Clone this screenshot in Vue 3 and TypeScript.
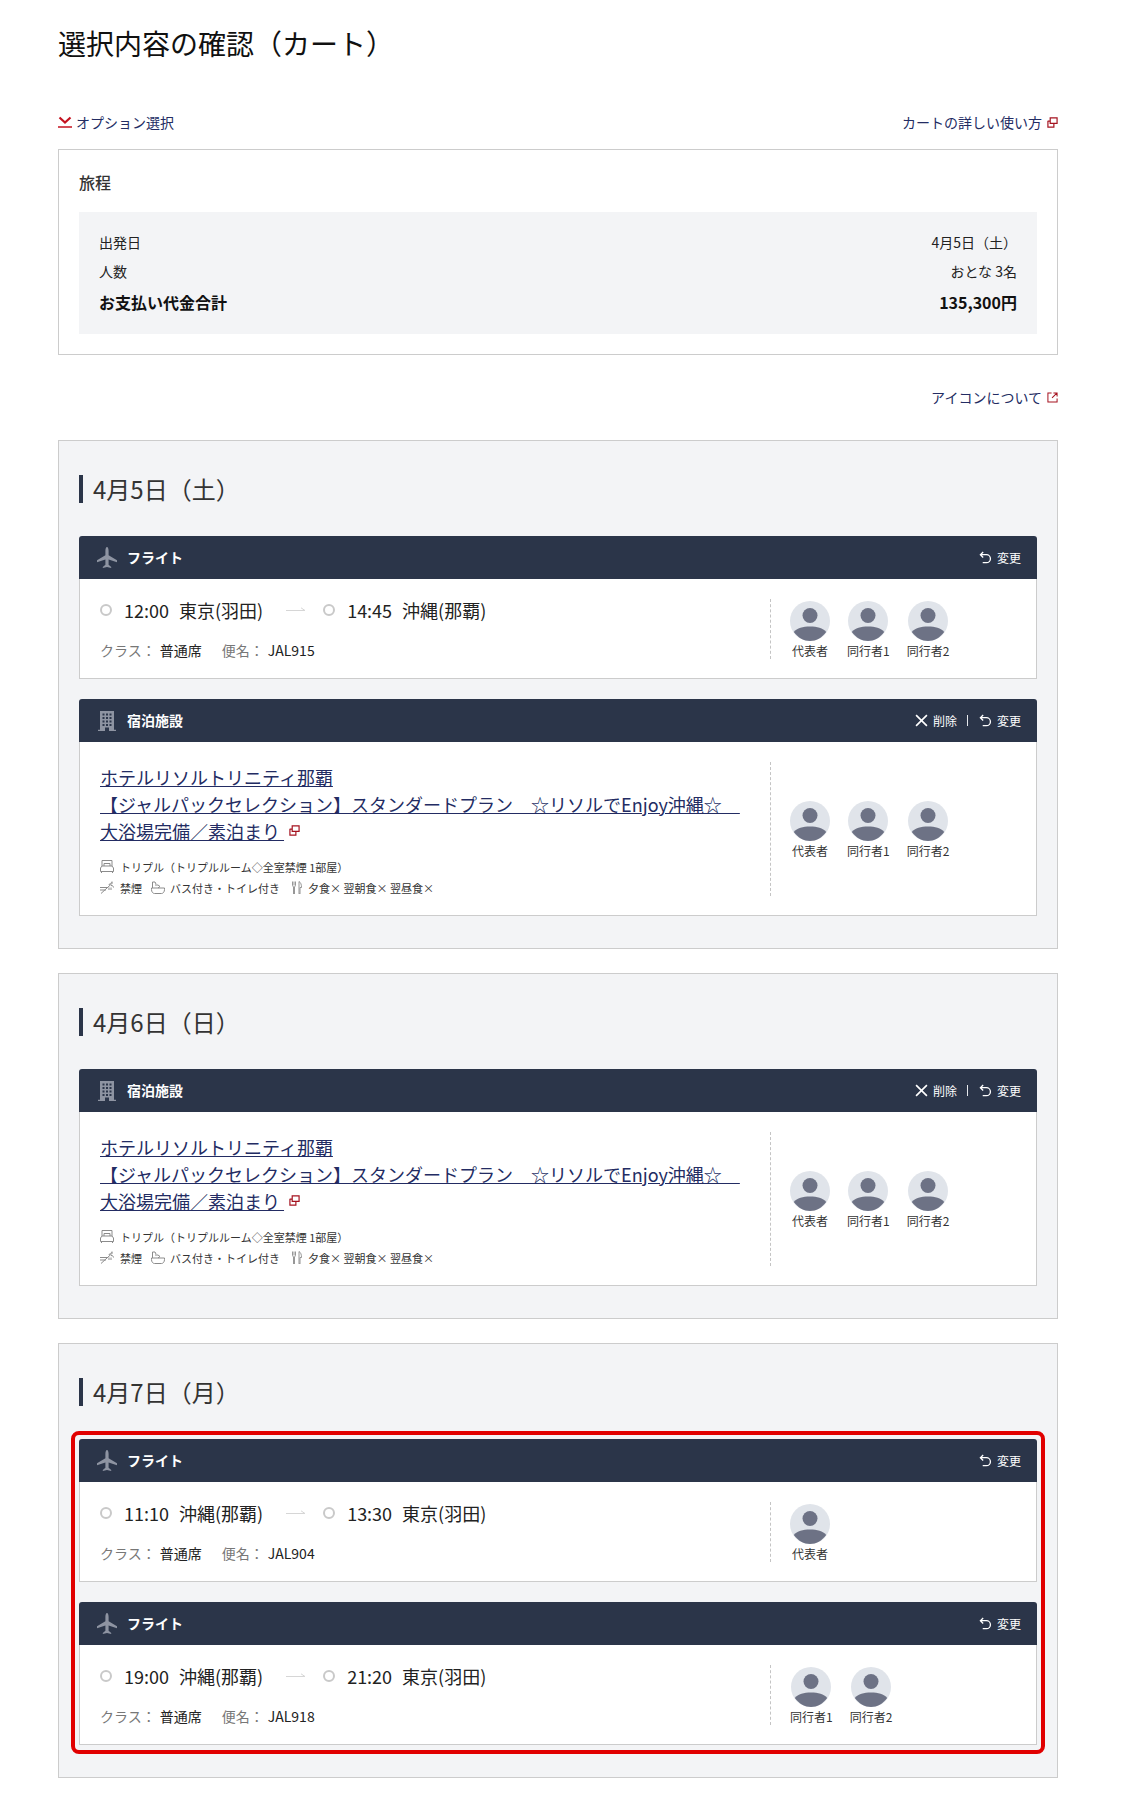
<script setup lang="ts">
type Flight = { type: 'flight'; dep: string; from: string; arr: string; to: string; no: string; people: string[] }
type Hotel = { type: 'hotel'; people: string[] }
type Item = Flight | Hotel
type Day = { date: string; items: Item[]; highlight?: boolean }

const all = ['代表者', '同行者1', '同行者2']
const days: Day[] = [
  {
    date: '4月5日（土）',
    items: [
      { type: 'flight', dep: '12:00', from: '東京(羽田)', arr: '14:45', to: '沖縄(那覇)', no: 'JAL915', people: all },
      { type: 'hotel', people: all },
    ],
  },
  { date: '4月6日（日）', items: [{ type: 'hotel', people: all }] },
  {
    date: '4月7日（月）',
    highlight: true,
    items: [
      { type: 'flight', dep: '11:10', from: '沖縄(那覇)', arr: '13:30', to: '東京(羽田)', no: 'JAL904', people: ['代表者'] },
      { type: 'flight', dep: '19:00', from: '沖縄(那覇)', arr: '21:20', to: '東京(羽田)', no: 'JAL918', people: ['同行者1', '同行者2'] },
    ],
  },
]
</script>

<template>
  <main class="page">
    <svg class="sprite" width="0" height="0" aria-hidden="true">
      <symbol id="plane" viewBox="0 0 20 22">
        <path d="M10 0c1 0 1.600 2 1.600 4v4.200l8.400 5v2l-8.400-2.600v5.200l2.600 2.100V21l-4.200-1-4.200 1v-1.100l2.600-2.100v-5.200L0 15.200v-2l8.400-5V4C8.400 2 9 0 10 0z" fill="#8e94a2" />
      </symbol>
      <symbol id="building" viewBox="0 0 18 20">
        <path fill-rule="evenodd" fill="#8e94a2" d="M2 0h14v18.800h2V20H0v-1.200h2zM4.500 2.500v2h2v-2zm3.500 0v2h2v-2zm3.500 0v2h2v-2zM4.500 6v2h2V6zM8 6v2h2V6zm3.500 0v2h2V6zM4.500 9.500v2h2v-2zm3.500 0v2h2v-2zm3.500 0v2h2v-2zM4.500 13v2h2v-2zm3.500 0v2h2v-2zm3.500 0v2h2v-2zM7 16.500V20h4v-3.500z" />
      </symbol>
      <symbol id="undo" viewBox="0 0 14 14">
        <path d="M4.500 1 1.500 4l3 3M2 4h6a4.300 4.300 0 0 1 0 8.600H4" fill="none" stroke="#fff" stroke-width="1.400" />
      </symbol>
      <symbol id="close" viewBox="0 0 12 12">
        <path d="M1 1l10 10M11 1 1 11" fill="none" stroke="#fff" stroke-width="1.500" />
      </symbol>
      <symbol id="windows" viewBox="0 0 12 12">
        <path d="M3.500 1h7.500v6H3.500zM1 4.500h2.500M1 4v7h6.500V7" fill="none" stroke="#a5121f" stroke-width="1.300" />
      </symbol>
      <symbol id="external" viewBox="0 0 12 12">
        <path d="M5 1H1v10h10V7M7 1h4v4M11 1 5.500 6.500" fill="none" stroke="#a5121f" stroke-width="1.100" />
      </symbol>
      <symbol id="bed" viewBox="0 0 14 13">
        <path d="M2 6V.5h10V6M4 6V3.500h6V6M.5 8l1.500-2h10l1.500 2v3.500H.5zM1.500 11.500V13M12.500 11.500V13" fill="none" stroke="#8b8b8b" stroke-width="1" />
      </symbol>
      <symbol id="nosmoke" viewBox="0 0 14 13">
        <path d="M0 6.500h8M0 9h6M9 6.500v2.500M11 6.500v2.500M9 4c0-2 3-1 3-3.500M11 4.500c2 0 2.500 1 2.500 2M1 12.500 13 1.500" fill="none" stroke="#8b8b8b" stroke-width="1" />
      </symbol>
      <symbol id="bath" viewBox="0 0 14 13">
        <path d="M1.500 7V1h2.500l1 2M4 4h3l2 1.500-2 1.500M.5 7h13v1.500c0 2.500-1.500 4-3 4h-7c-1.500 0-3-1.500-3-4z" fill="none" stroke="#8b8b8b" stroke-width="1" />
      </symbol>
      <symbol id="fork" viewBox="0 0 10 13">
        <path d="M.5 .5v4l1 1.500v7M3.500 .5v4l-1 1.500v7M2 .5v4M7 .5c1.800 1 2.500 3 2.500 6H8V13H7z" fill="none" stroke="#8b8b8b" stroke-width=".9" />
      </symbol>
      <symbol id="avatar" viewBox="0 0 40 40">
        <circle cx="20" cy="20" r="20" fill="#e0e4ea" />
        <circle cx="20" cy="14.500" r="7.500" fill="#6d7285" />
        <path d="M3.800 31C7 27 13 25.500 20 25.500S33 27 36.200 31C32 36.800 26 40 20 40S8 36.800 3.800 31z" fill="#6d7285" />
      </symbol>
    </svg>

    <h1 class="title">選択内容の確認（カート）</h1>

    <div class="links">
      <a class="option">
        <svg class="chev" viewBox="0 0 14 12"><path d="M1.500 1.500 7 6.500l5.500-5" fill="none" stroke="#c4121f" stroke-width="2.200" /><path d="M0 11h14" stroke="#c4121f" stroke-width="1.500" /></svg>
        オプション選択
      </a>
      <a class="link">カートの詳しい使い方<svg class="ext"><use href="#windows" /></svg></a>
    </div>

    <section class="summary">
      <h2>旅程</h2>
      <dl class="table">
        <div class="row"><dt>出発日</dt><dd>4月5日（土）</dd></div>
        <div class="row"><dt>人数</dt><dd>おとな 3名</dd></div>
        <div class="row total"><dt>お支払い代金合計</dt><dd>135,300円</dd></div>
      </dl>
    </section>

    <div class="icon-link">
      <a class="link">アイコンについて<svg class="ext"><use href="#external" /></svg></a>
    </div>

    <section v-for="day in days" :key="day.date" class="day">
      <h2 class="date">{{ day.date }}</h2>
      <div class="cards" :class="{ marked: day.highlight }">
        <article v-for="(item, i) in day.items" :key="i" class="card">
          <header class="bar">
            <span class="bar-title" v-if="item.type === 'flight'">
              <svg class="plane"><use href="#plane" /></svg>フライト
            </span>
            <span class="bar-title" v-else>
              <svg class="plane building"><use href="#building" /></svg>宿泊施設
            </span>
            <span class="actions">
              <template v-if="item.type === 'hotel'">
                <span class="act"><svg class="x"><use href="#close" /></svg>削除</span>
                <i class="sep"></i>
              </template>
              <span class="act"><svg class="undo"><use href="#undo" /></svg>変更</span>
            </span>
          </header>
          <div class="body">
            <div class="detail" :class="{ stay: item.type === 'hotel' }">
              <template v-if="item.type === 'flight'">
                <div class="route">
                  <i class="dot"></i><span class="time">{{ item.dep }}</span><span class="place">{{ item.from }}</span>
                  <svg class="arrow" viewBox="0 0 20 6"><path d="M0 3.500h19M15 .8 19 3.500" fill="none" stroke="#d6d6d6" stroke-width="1" /></svg>
                  <i class="dot"></i><span class="time">{{ item.arr }}</span><span class="place">{{ item.to }}</span>
                </div>
                <div class="meta">
                  <span class="key">クラス：</span><span class="val">普通席</span>
                  <span class="key second">便名：</span><span class="val">{{ item.no }}</span>
                </div>
              </template>
              <template v-else>
                <a class="hotel">ホテルリソルトリニティ那覇<br />【ジャルパックセレクション】スタンダードプラン　☆リソルでEnjoy沖縄☆　<br />大浴場完備／素泊まり </a><svg class="ext hotel-ext"><use href="#windows" /></svg>
                <div class="room">
                  <div class="room-line"><svg class="mini"><use href="#bed" /></svg>トリプル（トリプルルーム◇全室禁煙 1部屋）</div>
                  <div class="room-line">
                    <svg class="mini"><use href="#nosmoke" /></svg><span class="spec">禁煙</span>
                    <svg class="mini tight"><use href="#bath" /></svg><span class="spec wide">バス付き・トイレ付き</span>
                    <svg class="mini fork"><use href="#fork" /></svg><span>夕食× 翌朝食× 翌昼食×</span>
                  </div>
                </div>
              </template>
            </div>
            <div class="people">
              <div v-for="p in item.people" :key="p" class="person">
                <svg class="avatar"><use href="#avatar" /></svg>
                <span>{{ p }}</span>
              </div>
            </div>
          </div>
        </article>
      </div>
    </section>
  </main>
</template>

<style scoped>
.page {
  width: 1000px;
  margin-left: 58px;
  padding-bottom: 17px;
  font-family: "Noto Sans CJK JP", "Noto Sans", sans-serif;
  color: #222;
}
.sprite { position: absolute; }
.title {
  margin: 0;
  padding-top: 24px;
  height: 87px;
  box-sizing: border-box;
  font-size: 28px;
  line-height: 38px;
  font-weight: 400;
  color: #111;
}
.links {
  display: flex;
  justify-content: space-between;
  align-items: center;
  height: 20px;
  margin-top: 25px;
  margin-bottom: 17px;
  font-size: 14px;
  color: #232c63;
}
.option, .link { display: inline-flex; align-items: center; }
.chev { width: 14px; height: 12px; margin-right: 4px; }
.ext { width: 11px; height: 11px; margin-left: 5px; flex: none; }
.summary {
  border: 1px solid #cccccc;
  padding: 20px;
  height: 206px;
  box-sizing: border-box;
}
.summary h2 {
  margin: 0 0 18px;
  font-size: 16px;
  line-height: 24px;
  font-weight: 500;
  color: #333;
}
.table {
  margin: 0;
  background: #f3f4f6;
  padding: 16px 20px;
  height: 122px;
  box-sizing: border-box;
  font-size: 14px;
}
.row {
  display: flex;
  justify-content: space-between;
  height: 29px;
  line-height: 29px;
}
.row dd { margin: 0; }
.total { font-size: 16px; font-weight: 700; height: 32px; line-height: 32px; color: #111; }
.icon-link {
  display: flex;
  justify-content: flex-end;
  height: 20px;
  margin-top: 32px;
  margin-bottom: 33px;
  font-size: 14px;
  line-height: 20px;
  color: #232c63;
}
.day {
  background: #f3f4f6;
  border: 1px solid #cccccc;
  padding: 34px 20px 32px;
  margin-bottom: 24px;
}
.day:last-child { margin-bottom: 0; }
.date {
  margin: 0 0 33px;
  border-left: 4px solid #2b3549;
  padding-left: 10px;
  font-size: 24px;
  line-height: 28px;
  font-weight: 400;
  color: #333;
}
.cards { display: flex; flex-direction: column; gap: 20px; position: relative; }
.marked::after {
  content: "";
  position: absolute;
  inset: -8px -8px -9px;
  border: 4px solid #e10000;
  border-radius: 8px;
  pointer-events: none;
}
.bar {
  display: flex;
  justify-content: space-between;
  align-items: center;
  height: 43px;
  padding: 0 16px;
  background: #2b3549;
  border-radius: 3px 3px 0 0;
  color: #fff;
}
.bar-title {
  display: flex;
  align-items: center;
  font-size: 14px;
  font-weight: 700;
  line-height: 20px;
  padding-bottom: 1px;
}
.plane { width: 20px; height: 22px; margin: 1px 10px 0 2px; }
.building { width: 18px; height: 20px; margin: 1px 11px 0 3px; }
.actions { display: flex; align-items: center; font-size: 12px; }
.act { display: inline-flex; align-items: center; }
.undo { width: 13px; height: 13px; margin-right: 5px; }
.x { width: 13px; height: 13px; margin-right: 5px; }
.sep { width: 1px; height: 11px; background: #e6e8ec; margin: 0 11px 0 10px; }
.body {
  display: flex;
  align-items: stretch;
  background: #fff;
  border: 1px solid #cccccc;
  border-top: 0;
  padding: 20px 0 19px 20px;
}
.detail { width: 670px; flex: none; font-size: 18px; }
.stay { padding-top: 2px; margin-bottom: -2px; }
.route {
  display: flex;
  align-items: center;
  height: 22px;
  font-size: 18px;
  color: #222;
}
.dot {
  width: 12px;
  height: 12px;
  box-sizing: border-box;
  border: 2px solid #c9c9c9;
  border-radius: 50%;
  margin-right: 12px;
}
.time { margin-right: 10px; }
.arrow { width: 20px; height: 6px; margin: 0 17px 0 23px; }
.meta { margin-top: 20px; font-size: 14px; line-height: 18px; }
.key { color: #777; }
.val { color: #222; margin-left: 4px; }
.second { margin-left: 20px; }
.hotel {
  font-size: 18px;
  line-height: 27px;
  color: #232c63;
  text-decoration: underline;
  white-space: pre-wrap;
}
.hotel-ext { vertical-align: 3px; }
.room { margin-top: 11px; font-size: 11px; color: #333; }
.room-line { display: flex; align-items: center; height: 21px; }
.mini { width: 14px; height: 13px; margin-right: 6px; flex: none; }
.tight { margin-right: 5px; }
.fork { width: 10px; margin-right: 6px; }
.spec { margin-right: 9px; }
.wide { margin-right: 12px; }
.people {
  flex: 1;
  display: flex;
  align-items: center;
  gap: 17px;
  border-left: 1px dashed #c4c4c4;
  padding-left: 19px;
}
.person {
  display: flex;
  flex-direction: column;
  align-items: center;
  min-width: 40px;
  margin-top: 2px;
  font-size: 12px;
  color: #333;
}
.person span { padding-top: 1px; line-height: 17px; }
.avatar { width: 40px; height: 40px; display: block; }
</style>
